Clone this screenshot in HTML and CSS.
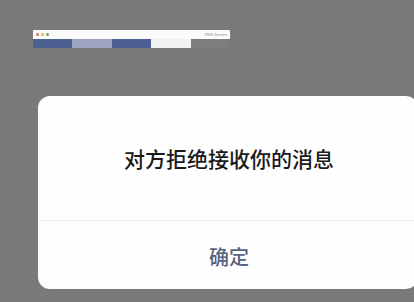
FILE: index.html
```html
<!DOCTYPE html>
<html lang="zh">
<head>
<meta charset="utf-8">
<link rel="stylesheet" href="styles.css">
</head>
<body>
<div class="page">
  <div class="mini-window">
    <div class="mini-title">
      <span class="dot red"></span><span class="dot yellow"></span><span class="dot green"></span>
      <span class="mini-label">RSS Screen</span>
    </div>
    <div class="mini-bars">
      <span class="bar b1"></span><span class="bar b2"></span><span class="bar b3"></span><span class="bar b4"></span><span class="bar b5"></span>
    </div>
  </div>
  <div class="dialog">
    <div class="dialog-msg">对方拒绝接收你的消息</div>
    <div class="dialog-btn">确定</div>
  </div>
</div>
</body>
</html>
```
FILE: styles.css
```css
html, body {
  margin: 0;
  padding: 0;
}
body {
  width: 414px;
  height: 302px;
  overflow: hidden;
  background: #7b7a7b;
  font-family: "Noto Sans CJK SC", "Noto Sans", sans-serif;
}
.page {
  padding: 30px 0 0 33px;
}
.mini-window {
  width: 197px;
  display: flex;
  flex-direction: column;
}
.mini-title {
  height: 9px;
  background: #fbfbfc;
  display: flex;
  align-items: center;
  gap: 2px;
  padding: 0 3px;
  border-radius: 1px 1px 0 0;
}
.dot {
  width: 3px;
  height: 3px;
  border-radius: 50%;
}
.red { background: #e0705f; }
.yellow { background: #d9b85a; }
.green { background: #6aa85a; }
.mini-label {
  margin-left: auto;
  font-family: "Liberation Sans", sans-serif;
  font-size: 4px;
  color: #888;
}
.mini-bars {
  display: flex;
  height: 9px;
}
.bar { flex: 1; }
.b1 { background: #4c5f91; }
.b2 { background: #9ea5c1; }
.b3 { background: #4c5f93; }
.b4 { background: #f1f1f3; }
.b5 { background: #7e7d7e; }
.dialog {
  margin: 48px 0 0 5px;
  width: 380px;
  height: 193px;
  background: #fefefe;
  border-radius: 12px;
  display: flex;
  flex-direction: column;
}
.dialog-msg {
  height: 124px;
  display: flex;
  align-items: center;
  justify-content: center;
  font-size: 21px;
  font-weight: 500;
  color: #1a1a1a;
  border-bottom: 1px solid #f0f0f0;
}
.dialog-msg, .dialog-btn {
  margin-right: -2px;
}
.dialog-btn {
  flex: 1;
  display: flex;
  align-items: center;
  justify-content: center;
  font-size: 20px;
  font-weight: 500;
  color: #56637f;
  padding-top: 2px;
}
```
